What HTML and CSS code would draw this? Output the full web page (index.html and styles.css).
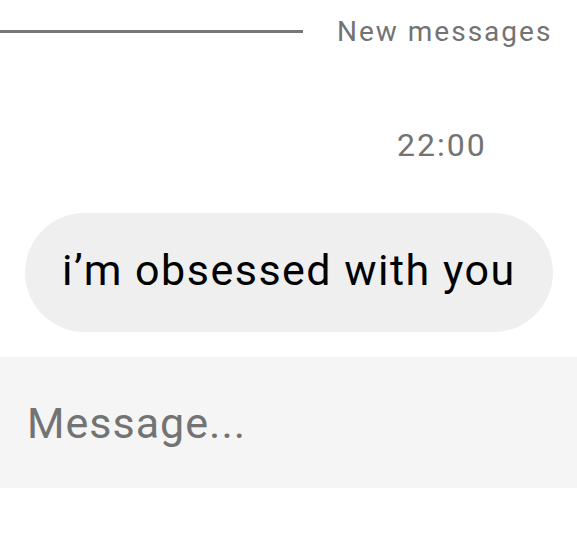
FILE: index.html
```html
<!DOCTYPE html>
<html lang="en">

<head>
  <meta charset="UTF-8">
  <title>Chat</title>
  <link rel="stylesheet" href="styles.css">
</head>

<body>
  <div class="divisor">
    <span class="linea"></span>
    <span class="etiqueta">New messages</span>
  </div>

  <p class="hora">22:00</p>

  <div class="mensaje">i’m obsessed with you</div>

  <div class="entrada">
    <span class="placeholder">Message...</span>
  </div>
</body>

</html>
```

FILE: styles.css
```css
body {
  font-family: Roboto, "Noto Sans", sans-serif;
  background-color: #fff;
  margin: 0;
  padding: 0;
  color: #000;
}

.divisor {
  display: flex;
  align-items: center;
  height: 62px;
}

.linea {
  flex: 0 0 303px;
  height: 3px;
  background-color: #777;
}

.etiqueta {
  margin-left: 34px;
  font-size: 28px;
  letter-spacing: 2px;
  color: #737373;
}

.hora {
  margin: 63px 0 0 397px;
  font-size: 32px;
  line-height: 40px;
  letter-spacing: 2px;
  color: #737373;
}

.mensaje {
  display: flex;
  align-items: center;
  box-sizing: border-box;
  width: 528px;
  height: 119px;
  margin: 48px 0 0 25px;
  padding: 0 0 6px 37px;
  border-radius: 60px;
  background-color: #efefef;
  font-size: 43px;
  letter-spacing: 1.5px;
}

.entrada {
  display: flex;
  align-items: center;
  height: 131px;
  margin-top: 25px;
  padding-left: 27px;
  background-color: #f5f5f6;
}

.placeholder {
  font-size: 43px;
  letter-spacing: 1px;
  color: #737373;
}
```
